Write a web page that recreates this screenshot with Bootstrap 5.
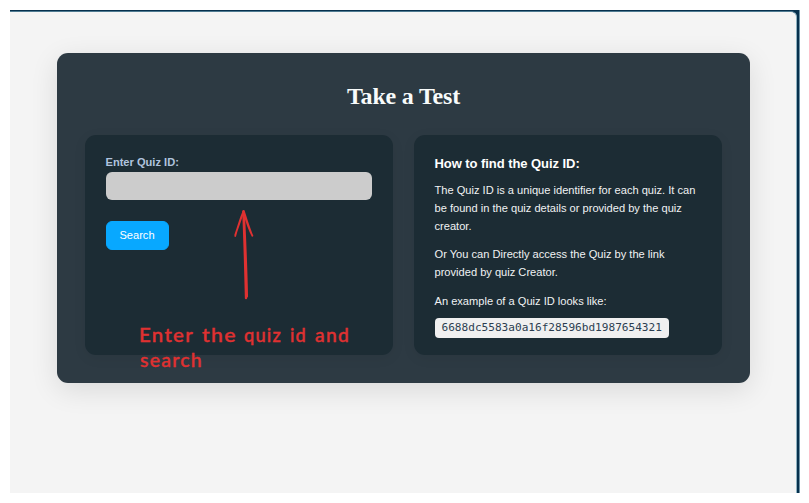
<!DOCTYPE html>
<html lang="en">
<head>
<meta charset="utf-8">
<meta name="viewport" content="width=device-width, initial-scale=1">
<title>Take a Test</title>
<link href="https://cdn.jsdelivr.net/npm/bootstrap@5.3.0/dist/css/bootstrap.min.css" rel="stylesheet">
<style>
body{background:#fff;font-family:"Liberation Sans",Arial,sans-serif;font-size:11.1px;line-height:17.76px;overflow:hidden}
.frame{width:790px;height:483px;margin:10px 0 0 10px;background:#06304d;padding:1px 2px 0 0;border-right:1px solid #6f92a5}
.page{background:#f4f4f4;border-top:1px solid #4f7b92;border-right:1px solid #8db1c0;border-top-right-radius:6px;padding:41px 46px 0 47px}
.quiz{width:693px;height:330px;border-radius:11px;background:#2d3a43;box-shadow:0 7px 28px rgba(0,0,0,.11);padding:28px}
.quiz h1{font:bold 24px/31px "Liberation Serif",serif;letter-spacing:-.2px;color:#f8fbfb;margin:0 0 23px}
.panels{gap:21px}
.pane{flex:1 1 0;height:220px;border-radius:11px;background:#1c2c34;box-shadow:0 3px 14px rgba(0,0,0,.06);padding:18px 21px 18px 20.5px}
.pane label{color:#b0c4de;line-height:19px}
.pane .form-control{height:28px;min-height:0;background:#ccc;border:0;border-radius:6px;margin-bottom:21px}
.btn-search{--bs-btn-color:#fff;--bs-btn-bg:#08a8ff;--bs-btn-border-color:#08a8ff;--bs-btn-font-size:11.1px;--bs-btn-line-height:1;--bs-btn-border-radius:6px;width:63px;height:29px;padding:0}
.pane h2{font-size:13px;letter-spacing:-.06px;line-height:21px;font-weight:700;color:#fff;margin:0 0 8px}
.pane p{color:#f0f2f3;margin:0 0 11.2px}
.quiz-id{display:inline-block;background:#f0f0f0;color:#2c3e50;border-radius:4px;height:20px;padding:0 7px;font:11.1px/20px "DejaVu Sans Mono",monospace}
.id-row{padding-top:7px}
.note{left:55px;top:187px;font:500 18.5px Lato,sans-serif}
.arrow{left:145px;top:70px}
.note text{fill:#e03131;stroke:#e03131;stroke-width:.35px}
</style>
</head>
<body>
<div class="frame">
  <main class="page h-100">
    <section class="quiz">
      <h1 class="text-center">Take a Test</h1>
      <div class="panels d-flex">
        <form class="pane position-relative">
          <label for="quizId" class="d-block fw-bold">Enter Quiz ID:</label>
          <input id="quizId" type="text" class="form-control">
          <button type="button" class="btn btn-search">Search</button>
          <svg class="arrow position-absolute" width="40" height="100" viewBox="230 205 40 100" fill="none" stroke="#e03131" stroke-linecap="round" stroke-linejoin="round">
            <path stroke-width="2.3" d="M246 298.2C245.3 270 244.6 240 243.3 211.5M246.9 296.5C246.3 268 245 238 243.9 215"/>
            <path stroke-width="1.8" d="M235.2 236C237.6 227.4 240.2 218.6 243.6 211M235.3 234.8C238.3 226 241 219 243.5 211.3C246 220.5 248.7 229 252.4 235.8M243.8 211C246.3 219 248.4 226.2 252 235"/>
          </svg>
          <svg class="note position-absolute" width="230" height="60" viewBox="140 322 230 60" overflow="visible">
            <g letter-spacing="1.2">
              <text x="139" y="341.5" textLength="55" lengthAdjust="spacingAndGlyphs">Enter</text>
              <text x="202" y="341.5" textLength="35" lengthAdjust="spacingAndGlyphs">the</text>
              <text x="244" y="341.5" textLength="38" lengthAdjust="spacingAndGlyphs">quiz</text>
              <text x="290" y="341.5" textLength="17" lengthAdjust="spacingAndGlyphs">id</text>
              <text x="315" y="341.5" textLength="35" lengthAdjust="spacingAndGlyphs">and</text>
              <text x="140" y="366.5" textLength="63" lengthAdjust="spacingAndGlyphs">search</text>
            </g>
          </svg>
        </form>
        <section class="pane">
          <h2>How to find the Quiz ID:</h2>
          <p>The Quiz ID is a unique identifier for each quiz. It can<br>be found in the quiz details or provided by the quiz<br>creator.</p>
          <p>Or You can Directly access the Quiz by the link<br>provided by quiz Creator.</p>
          <p class="mb-0">An example of a Quiz ID looks like:</p>
          <div class="id-row"><span class="quiz-id">6688dc5583a0a16f28596bd1987654321</span></div>
        </section>
      </div>
    </section>
  </main>
</div>
<script src="https://cdn.jsdelivr.net/npm/bootstrap@5.3.0/dist/js/bootstrap.bundle.min.js"></script>
</body>
</html>
